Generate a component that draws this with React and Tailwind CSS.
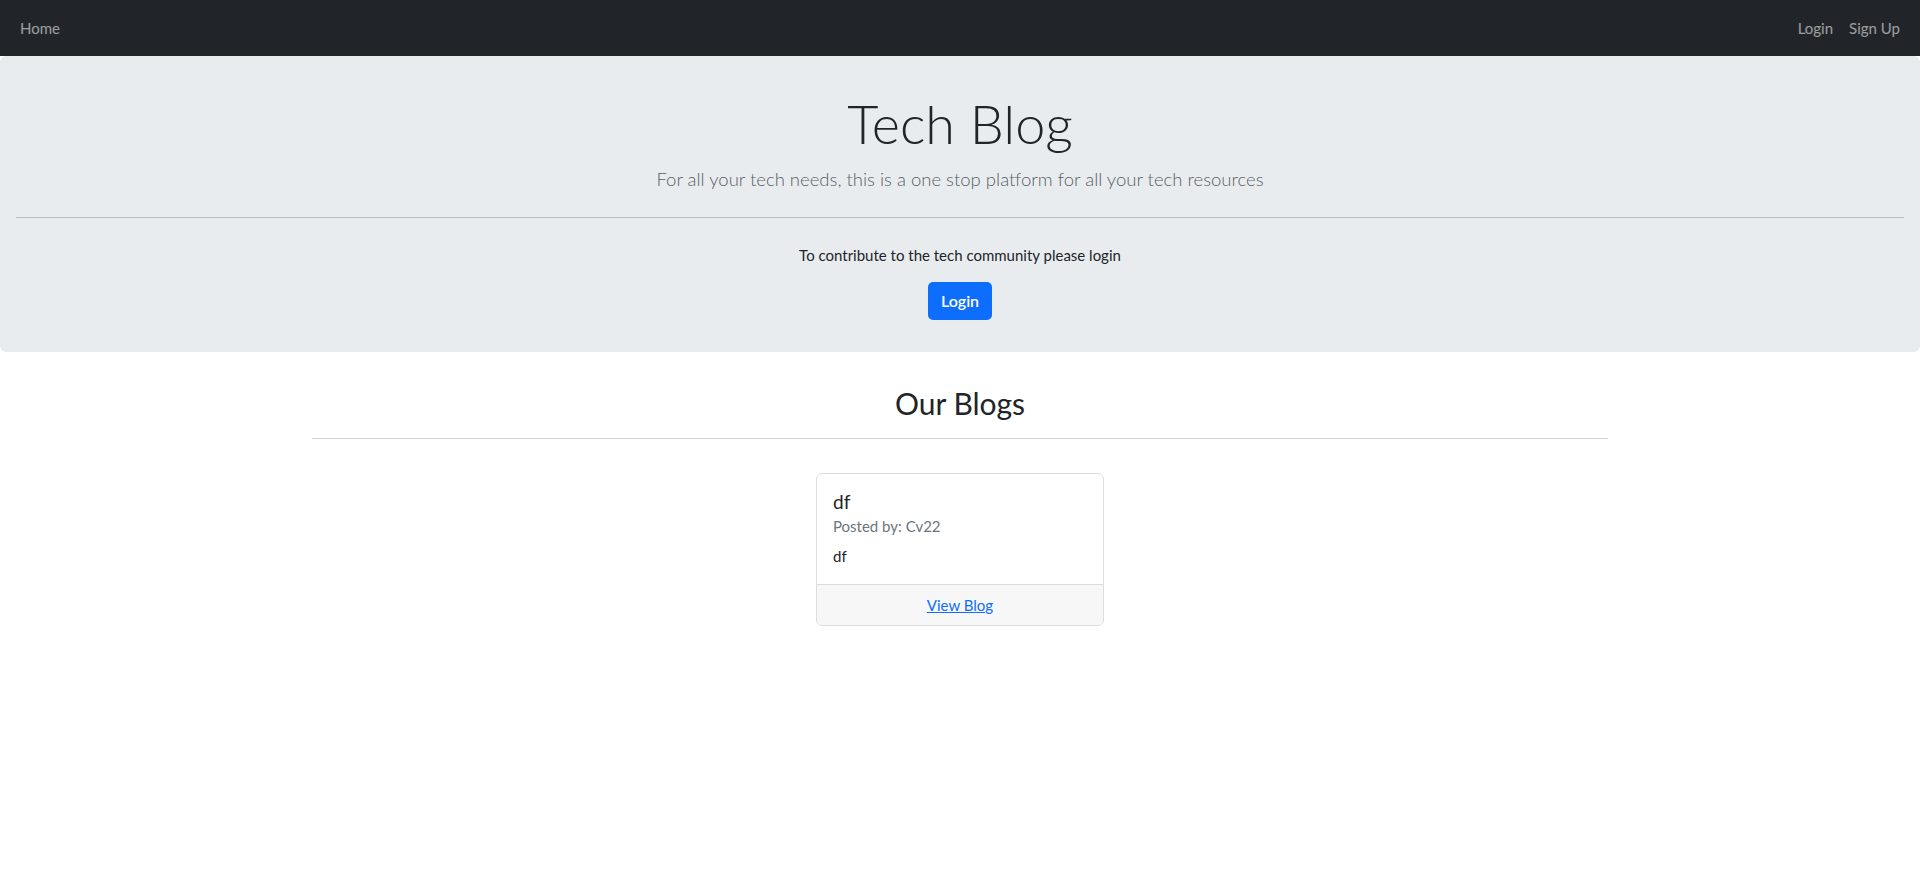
import React from 'react';

const font = { fontFamily: '"Source Sans Pro", Lato, "Liberation Sans", sans-serif' };

function Navbar() {
  return (
    <nav className="h-14 bg-[#212529] flex items-center justify-between px-5">
      <a href="#" className="text-white/55 text-[15px]">Home</a>
      <div className="flex items-center gap-4">
        <a href="#" className="text-white/55 text-[15px]">Login</a>
        <a href="#" className="text-white/55 text-[15px]">Sign Up</a>
      </div>
    </nav>
  );
}

function Hero() {
  return (
    <div className="bg-[#e9ecef] rounded-md px-4 pt-8 pb-8 text-center">
      <h1 className="text-[54px] leading-[72px] font-light text-[#212529]">Tech Blog</h1>
      <p className="mt-1 text-[18.5px] leading-[30px] font-light text-[#595f66]">
        For all your tech needs, this is a one stop platform for all your tech resources
      </p>
      <hr className="mt-[23px] border-0 border-t border-[#b9bcbf]" />
      <p className="mt-[25px] text-[15px] leading-6 text-[#212529]">To contribute to the tech community please login</p>
      <button className="mt-[15px] h-[38px] px-[13px] bg-[#0d6efd] text-white font-semibold rounded-[5px] text-[16px]">
        Login
      </button>
    </div>
  );
}

function BlogCard({ title, author, body }) {
  return (
    <div className="w-72 border border-[#dcdcdc] rounded-md overflow-hidden bg-white">
      <div className="px-4 pt-4 pb-4">
        <h5 className="text-[19px] leading-6 text-[#212529]">{title}</h5>
        <p className="text-[15px] leading-6 text-[#6c757d]">Posted by: {author}</p>
        <p className="mt-[6px] text-[15px] leading-6 text-[#212529]">{body}</p>
      </div>
      <div className="bg-[#f7f7f7] border-t border-[#dcdcdc] py-2 text-center">
        <a href="#" className="text-[#0d6efd] underline text-[15px] leading-6">View Blog</a>
      </div>
    </div>
  );
}

export default function App() {
  const blogs = [{ id: 1, title: 'df', author: 'Cv22', body: 'df' }];

  return (
    <div className="min-h-screen bg-white" style={font}>
      <Navbar />
      <Hero />
      <div className="max-w-[1320px] mx-auto px-3">
        <h2 className="mt-8 text-[30px] leading-[38px] text-center text-[#212529]">Our Blogs</h2>
        <hr className="mt-4 border-0 border-t border-[#d3d3d3]" />
        <div className="mt-[34px] flex justify-center gap-4">
          {blogs.map(blog => (
            <BlogCard key={blog.id} {...blog} />
          ))}
        </div>
      </div>
    </div>
  );
}
